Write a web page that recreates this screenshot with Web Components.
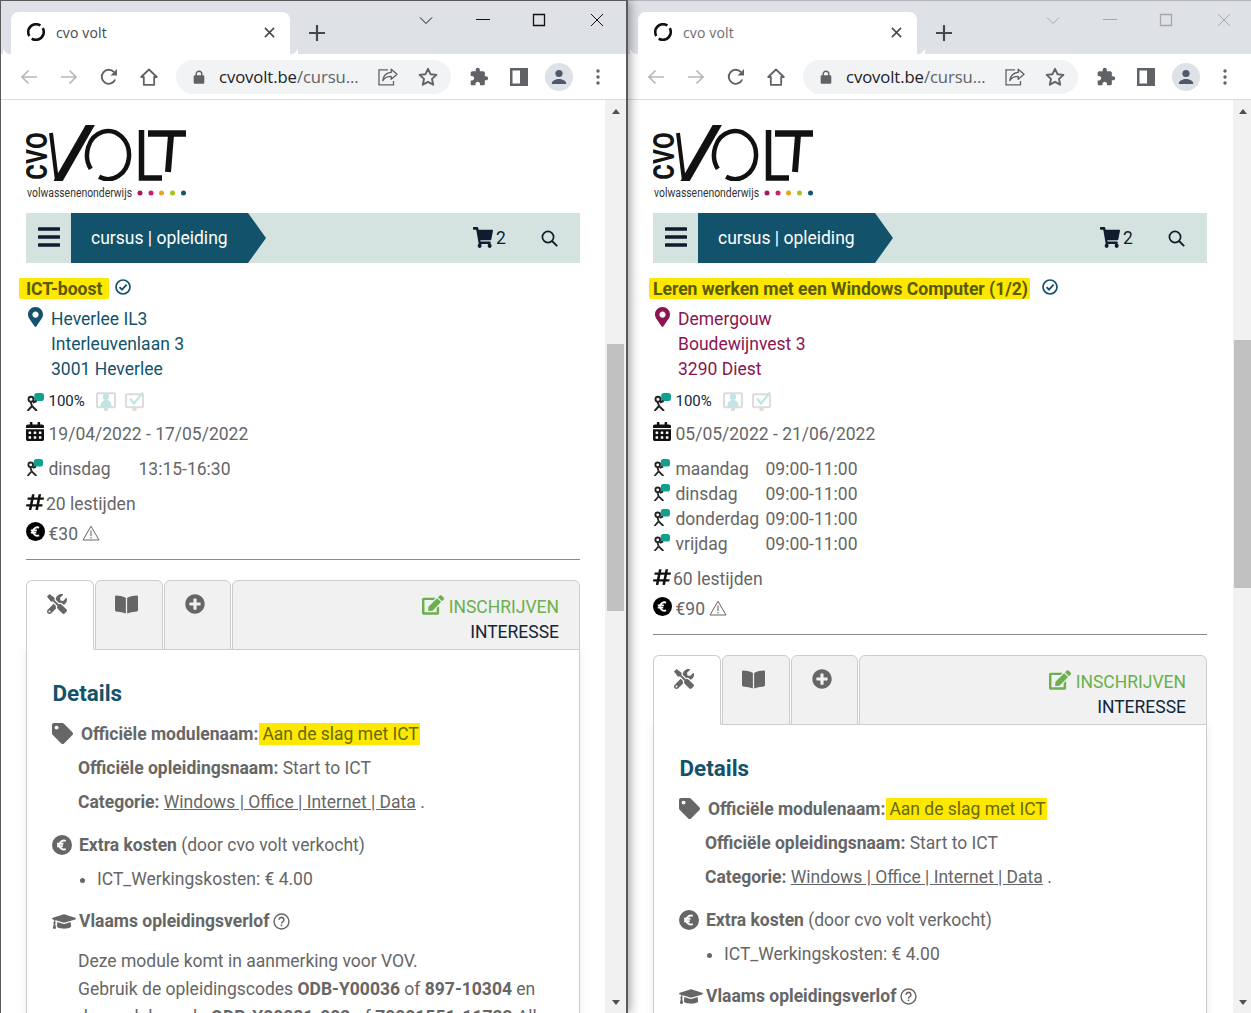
<!DOCTYPE html>
<html lang="nl"><head><meta charset="utf-8"><title>cvo volt</title>
<style>
html,body{margin:0;height:100%;overflow:hidden;background:#fff}
body{display:flex;font:17.5px/25px Roboto,"Liberation Sans",sans-serif;color:#666}
b{font-weight:700}
a{color:inherit;text-decoration:underline}
</style></head><body>

<browser-window sb="21" thumb-top="230" thumb-h="267">
  <window-chrome title="cvo volt"></window-chrome>
  <site-header></site-header>
  <course-title pl="7" pr="7" gap="6">ICT-boost</course-title>
  <course-address>Heverlee IL3<br>Interleuvenlaan 3<br>3001 Heverlee</course-address>
  <info-row style="margin-top:8px;padding-top:0;font-size:15px;color:#12263a"><presence-icons></presence-icons></info-row>
  <info-row style="margin-top:7px"><ui-icon slot="icon" name="calendar" w="18" h="19" stretch style="color:#111;margin:-7px 4.5px 0 0"></ui-icon>19/04/2022 - 17/05/2022</info-row>
  <day-row style="margin-top:10px" day="dinsdag" time="13:15-16:30" col="90"></day-row>
  <info-row style="margin-top:10px"><ui-icon slot="icon" name="hash" w="18" h="18" stretch style="color:#111;margin:-5px 2px 0 0"></ui-icon>20 lestijden</info-row>
  <price-row style="margin-top:5px">€30</price-row>
  <page-rule></page-rule>
  <tabs-panel>
    <detail-section></detail-section>
    <p style="margin:14px 0 0;line-height:28px;padding-left:25px;white-space:nowrap">Deze module komt in aanmerking voor VOV.<br>Gebruik de opleidingscodes <b>ODB-Y00036</b> of <b>897-10304</b> en<br><span style="word-spacing:2px">de module code</span> <b>ODB-Y00081-002</b> of <b>70001551-11723</b> All</p>
  </tabs-panel>
</browser-window>

<browser-window inactive sb="18" thumb-top="226" thumb-h="248">
  <window-chrome title="cvo volt" inactive></window-chrome>
  <site-header></site-header>
  <course-title pl="4" pr="2" gap="12">Leren werken met een Windows Computer (1/2)</course-title>
  <course-address style="color:#8a1550" pin="#8a1550">Demergouw<br>Boudewijnvest 3<br>3290 Diest</course-address>
  <info-row style="margin-top:8px;padding-top:0;font-size:15px;color:#12263a"><presence-icons></presence-icons></info-row>
  <info-row style="margin-top:7px"><ui-icon slot="icon" name="calendar" w="18" h="19" stretch style="color:#111;margin:-7px 4.5px 0 0"></ui-icon>05/05/2022 - 21/06/2022</info-row>
  <day-row style="margin-top:10px" day="maandag" time="09:00-11:00" col="90"></day-row>
  <day-row day="dinsdag" time="09:00-11:00" col="90"></day-row>
  <day-row day="donderdag" time="09:00-11:00" col="90"></day-row>
  <day-row day="vrijdag" time="09:00-11:00" col="90"></day-row>
  <info-row style="margin-top:10px"><ui-icon slot="icon" name="hash" w="18" h="18" stretch style="color:#111;margin:-5px 2px 0 0"></ui-icon>60 lestijden</info-row>
  <price-row style="margin-top:5px">€90</price-row>
  <page-rule></page-rule>
  <tabs-panel>
    <detail-section></detail-section>
  </tabs-panel>
</browser-window>

<script>
const P={
cart:['0 0 576 512','M528.12 301.319l47.273-208C578.806 78.301 567.391 64 551.99 64H159.208l-9.166-44.81C147.758 8.021 137.93 0 126.529 0H24C10.745 0 0 10.745 0 24v16c0 13.255 10.745 24 24 24h69.883l70.248 343.435C147.325 417.1 136 435.222 136 456c0 30.928 25.072 56 56 56s56-25.072 56-56c0-15.674-6.447-29.835-16.824-40h209.647C430.447 426.165 424 440.326 424 456c0 30.928 25.072 56 56 56s56-25.072 56-56c0-22.172-12.888-41.332-31.579-50.405l5.517-24.276c3.413-15.018-8.002-29.319-23.403-29.319H218.117l-6.545-32h293.145c11.206 0 20.92-7.754 23.403-18.681z'],
pin:['0 0 384 512','M172.268 501.67C26.97 291.031 0 256.281 0 192 0 85.961 85.961 0 192 0s192 85.961 192 192c0 64.281-26.97 99.031-172.268 309.67-9.535 13.774-29.93 13.773-39.464 0zM192 272c44.183 0 80-35.817 80-80s-35.817-80-80-80-80 35.817-80 80 35.817 80 80 80z'],
calendar:['0 0 448 512','M0 464c0 26.5 21.5 48 48 48h352c26.5 0 48-21.5 48-48V192H0v272zm320-196c0-6.6 5.4-12 12-12h40c6.6 0 12 5.4 12 12v40c0 6.6-5.4 12-12 12h-40c-6.6 0-12-5.4-12-12v-40zm0 128c0-6.6 5.4-12 12-12h40c6.6 0 12 5.4 12 12v40c0 6.6-5.4 12-12 12h-40c-6.6 0-12-5.4-12-12v-40zM192 268c0-6.6 5.4-12 12-12h40c6.6 0 12 5.4 12 12v40c0 6.6-5.4 12-12 12h-40c-6.6 0-12-5.4-12-12v-40zm0 128c0-6.6 5.4-12 12-12h40c6.6 0 12 5.4 12 12v40c0 6.6-5.4 12-12 12h-40c-6.6 0-12-5.4-12-12v-40zM64 268c0-6.6 5.4-12 12-12h40c6.6 0 12 5.4 12 12v40c0 6.6-5.4 12-12 12H76c-6.6 0-12-5.4-12-12v-40zm0 128c0-6.6 5.4-12 12-12h40c6.6 0 12 5.4 12 12v40c0 6.6-5.4 12-12 12H76c-6.6 0-12-5.4-12-12v-40zM400 64h-48V16c0-8.8-7.2-16-16-16h-32c-8.8 0-16 7.2-16 16v48H160V16c0-8.8-7.2-16-16-16h-32c-8.8 0-16 7.2-16 16v48H48C21.5 64 0 85.5 0 112v48h448v-48c0-26.5-21.5-48-48-48z'],
hash:['0 0 448 512','M440.667 182.109l7.143-40c1.313-7.355-4.342-14.109-11.813-14.109h-74.81l14.623-81.891C377.123 38.754 371.468 32 363.997 32h-40.632a12 12 0 0 0-11.813 9.891L296.175 128H197.54l14.623-81.891C213.477 38.754 207.822 32 200.35 32h-40.632a12 12 0 0 0-11.813 9.891L132.528 128H53.432a12 12 0 0 0-11.813 9.891l-7.143 40C33.163 185.246 38.818 192 46.289 192h74.81L98.242 320H19.146a12 12 0 0 0-11.813 9.891l-7.143 40C-1.123 377.246 4.532 384 12.003 384h74.81L72.19 465.891C70.877 473.246 76.532 480 84.003 480h40.632a12 12 0 0 0 11.813-9.891L151.826 384h98.634l-14.623 81.891C234.523 473.246 240.178 480 247.65 480h40.632a12 12 0 0 0 11.813-9.891L315.472 384h79.096a12 12 0 0 0 11.813-9.891l7.143-40c1.313-7.355-4.342-14.109-11.813-14.109h-74.81l22.857-128h79.096a12 12 0 0 0 11.813-9.891zM261.889 320h-98.634l22.857-128h98.634l-22.857 128z'],
tools:['0 0 512 512','M501.1 395.7L384 278.6c-23.1-23.1-57.6-27.6-85.4-13.9L192 158.1V96L64 0 0 64l96 128h62.1l106.6 106.6c-13.6 27.8-9.2 62.3 13.9 85.4l117.1 117.1c14.6 14.6 38.2 14.6 52.7 0l52.7-52.7c14.5-14.6 14.5-38.2 0-52.7zM331.7 225c28.3 0 54.9 11 74.9 31l19.4 19.4c15.8-6.9 30.8-16.5 43.8-29.5 37.1-37.1 49.7-89.3 37.9-136.7-2.2-9-13.5-12.1-20.1-5.5l-74.4 74.4-67.9-11.3L334 98.9l74.4-74.4c6.6-6.6 3.4-17.9-5.7-20.2-47.4-11.7-99.6.9-136.6 37.9-28.5 28.5-41.9 66.1-41.2 103.6l82.1 82.1c8.1-1.9 16.5-2.9 24.7-2.9zm-103.9 82l-56.7-56.7L18.7 402.8c-25 25-25 65.5 0 90.5s65.5 25 90.5 0l123.6-123.6c-7.6-19.9-9.9-41.6-5-62.7zM64 472c-13.2 0-24-10.8-24-24 0-13.3 10.7-24 24-24s24 10.7 24 24c0 13.2-10.7 24-24 24z'],
book:['0 0 576 512','M542.22 32.05c-54.8 3.11-163.72 14.43-230.96 55.59-4.64 2.84-7.27 7.89-7.27 13.17v363.87c0 11.55 12.63 18.85 23.28 13.49 69.18-34.82 169.23-44.32 218.7-46.92 16.89-.89 30.02-14.43 30.02-30.66V62.75c.01-17.71-15.35-31.74-33.77-30.7zM264.73 87.64C197.5 46.48 88.58 35.17 33.78 32.05 15.36 31.01 0 45.04 0 62.75V400.6c0 16.24 13.13 29.78 30.02 30.66 49.49 2.6 149.59 12.11 218.77 46.95 10.62 5.35 23.21-1.94 23.21-13.46V100.63c0-5.29-2.62-10.14-7.27-12.99z'],
plus:['0 0 512 512','M256 8C119 8 8 119 8 256s111 248 248 248 248-111 248-248S393 8 256 8zm144 276c0 6.6-5.4 12-12 12h-92v92c0 6.6-5.4 12-12 12h-56c-6.6 0-12-5.4-12-12v-92h-92c-6.6 0-12-5.4-12-12v-56c0-6.6 5.4-12 12-12h92v-92c0-6.6 5.4-12 12-12h56c6.6 0 12 5.4 12 12v92h92c6.6 0 12 5.4 12 12v56z'],
edit:['0 0 576 512','M402.6 83.2l90.2 90.2c3.8 3.8 3.8 10 0 13.8L274.4 405.6l-92.8 10.3c-12.4 1.4-22.9-9.1-21.5-21.5l10.3-92.8L388.8 83.2c3.8-3.8 10-3.8 13.8 0zm162-22.9l-48.8-48.8c-15.2-15.2-39.9-15.2-55.2 0l-35.4 35.4c-3.8 3.8-3.8 10 0 13.8l90.2 90.2c3.8 3.8 10 3.8 13.8 0l35.4-35.4c15.2-15.3 15.2-40 0-55.2zM384 346.2V448H64V128h229.8c3.2 0 6.2-1.3 8.5-3.5l40-40c7.6-7.6 2.2-20.5-8.5-20.5H48C21.5 64 0 85.5 0 112v352c0 26.5 21.5 48 48 48h352c26.5 0 48-21.5 48-48V306.2c0-10.7-12.9-16-20.5-8.5l-40 40c-2.2 2.3-3.5 5.3-3.5 8.5z'],
tag:['0 0 512 512','M0 252.118V48C0 21.49 21.49 0 48 0h204.118a48 48 0 0 1 33.941 14.059l211.882 211.882c18.745 18.745 18.745 49.137 0 67.882L293.823 497.941c-18.745 18.745-49.137 18.745-67.882 0L14.059 286.059A48 48 0 0 1 0 252.118zM112 64c-26.51 0-48 21.49-48 48s21.49 48 48 48 48-21.49 48-48-21.49-48-48-48z'],
cap:['0 0 640 512','M622.34 153.2L343.4 67.5c-15.2-4.67-31.6-4.67-46.79 0L17.66 153.2c-23.54 7.23-23.54 38.36 0 45.59l48.63 14.94c-10.67 13.19-17.23 29.28-17.88 46.9C38.78 266.15 32 276.11 32 288c0 10.78 5.68 19.85 13.86 25.65L20.33 428.53C18.11 438.52 25.71 448 35.94 448h56.11c10.24 0 17.84-9.48 15.62-19.47L82.14 313.65C90.32 307.85 96 298.78 96 288c0-11.57-6.47-21.25-15.66-26.87.76-15.02 8.44-28.3 20.69-36.72L296.6 284.5c9.06 2.78 26.44 6.25 46.79 0l278.95-85.7c23.55-7.24 23.55-38.36 0-45.6zM352.79 315.09c-28.53 8.76-52.84 3.92-65.59 0l-145.02-44.55L128 384c0 35.35 85.96 64 192 64s192-28.65 192-64l-14.18-113.47-145.03 44.56z'],
ext:['0 0 24 24','M20.5 11H19V7c0-1.1-.9-2-2-2h-4V3.5C13 2.12 11.88 1 10.5 1S8 2.12 8 3.5V5H4c-1.1 0-1.99.9-1.99 2v3.8H3.5c1.49 0 2.7 1.21 2.7 2.7s-1.21 2.7-2.7 2.7H2V20c0 1.1.9 2 2 2h3.8v-1.5c0-1.49 1.21-2.7 2.7-2.7 1.49 0 2.7 1.21 2.7 2.7V22H17c1.1 0 2-.9 2-2v-4h1.5c1.38 0 2.5-1.12 2.5-2.5S21.88 11 20.5 11z']
};
const RAW={
euro:`<svg viewBox="0 0 20 20"><circle cx="10" cy="10" r="10" fill="currentColor"/><path d="M13.8 5.9A4.8 4.8 0 0 0 7.2 10a4.8 4.8 0 0 0 6.6 4.1M5 8.8h6.4M5 11.2h5.8" fill="none" stroke="#fff" stroke-width="1.9"/></svg>`,
check:`<svg viewBox="0 0 16 16"><circle cx="8" cy="8" r="7" fill="none" stroke="currentColor" stroke-width="1.7"/><path d="M4.5 8.2l2.5 2.5 4.6-5" fill="none" stroke="currentColor" stroke-width="1.8"/></svg>`,
warn:`<svg viewBox="0 0 18 16"><path d="M9 1.2L17 15H1z" fill="none" stroke="currentColor" stroke-width="1" stroke-linejoin="round"/><path d="M9 5.6v5.4M9 12v1.4" stroke="currentColor" stroke-width="1.1"/></svg>`,
help:`<svg viewBox="0 0 18 18"><circle cx="9" cy="9" r="7.9" fill="none" stroke="currentColor" stroke-width="1.5"/><path d="M6.5 7.2a2.5 2.5 0 1 1 3.6 2.2c-.8.4-1.1.9-1.1 1.7M9 12.3v1.6" fill="none" stroke="currentColor" stroke-width="1.6"/></svg>`,
person:`<svg viewBox="0 0 18 18"><path d="M11 0h4.2A2.8 2.8 0 0 1 18 2.8v2.4A2.8 2.8 0 0 1 15.2 8H11L8.2 9.2 8.6 6.5A2.8 2.8 0 0 1 8.2 5.2V2.8A2.8 2.8 0 0 1 11 0z" fill="#12a08e"/><g fill="none" stroke="#222" stroke-width="1.9"><circle cx="5" cy="6.2" r="2.5"/><path d="M7 9.5l3.6-1.5M4.6 8.8l1.4 4.2M6 13L1.6 18M6 13l5 5"/></g></svg>`,
screenP:`<svg viewBox="0 0 20 19"><path d="M2 1.2h16a1 1 0 0 1 1 1v12a1 1 0 0 1-1 1H2a1 1 0 0 1-1-1v-12a1 1 0 0 1 1-1z" fill="none" stroke="#dcdcdc" stroke-width="2"/><path d="M8 15v4h4v-4" fill="#dcdcdc"/><circle cx="10" cy="4.8" r="3.2" fill="#c3e4e4"/><path d="M4.5 15c0-5 2-7 5.5-7s5.5 2 5.5 7z" fill="#c3e4e4"/></svg>`,
screenC:`<svg viewBox="0 0 20 19"><path d="M2 2.2h15a1 1 0 0 1 1 1v11a1 1 0 0 1-1 1H2a1 1 0 0 1-1-1v-11a1 1 0 0 1 1-1z" fill="none" stroke="#dcdcdc" stroke-width="2"/><path d="M7.5 15v4h4v-4" fill="#dcdcdc"/><path d="M5 6.500l4 5 9-11" fill="none" stroke="#c3e4e4" stroke-width="2.2"/></svg>`,
search:`<svg viewBox="0 0 17 17"><circle cx="7" cy="7" r="5.6" fill="none" stroke="currentColor" stroke-width="1.7"/><path d="M11 11l5.2 5.2" stroke="currentColor" stroke-width="1.9"/></svg>`,
bars:`<svg viewBox="0 0 22 22"><path d="M1 3h20M1 11h20M1 19h20" stroke="currentColor" stroke-width="3.4" stroke-linecap="round"/></svg>`,
back:`<svg viewBox="0 0 18 16"><path d="M17 8H2M8.5 1.5L2 8l6.5 6.5" fill="none" stroke="currentColor" stroke-width="1.7"/></svg>`,
forward:`<svg viewBox="0 0 18 16"><path d="M1 8h15M9.5 1.5L16 8l-6.5 6.5" fill="none" stroke="currentColor" stroke-width="1.7"/></svg>`,
reload:`<svg viewBox="0 0 18 18"><path d="M15.2 11.5A7 7 0 1 1 14 4.2" fill="none" stroke="currentColor" stroke-width="1.9"/><path d="M17 1v6.5h-6.5z" fill="currentColor"/></svg>`,
home:`<svg viewBox="0 0 18 18"><path d="M9 1.5L1.2 9h2.6v7.8h10.4V9h2.6z" fill="none" stroke="currentColor" stroke-width="1.8" stroke-linejoin="round"/></svg>`,
lock:`<svg viewBox="0 0 12 14"><path d="M3.2 6V4a2.8 2.8 0 0 1 5.6 0v2" fill="none" stroke="currentColor" stroke-width="1.4"/><rect x=".7" y="5.2" width="10.6" height="8.5" rx="1.2" fill="currentColor"/></svg>`,
share:`<svg viewBox="0 0 20 18"><path d="M10 1.8H1v15h14.5V13" fill="none" stroke="currentColor" stroke-width="1.3"/><path d="M13.2 1.2L19 6.3l-5.8 5V8.4c-4 0-6.6 1.2-8.4 4.2.5-4.700 3.300-7.700 8.400-8.200z" fill="none" stroke="currentColor" stroke-width="1.4" stroke-linejoin="round"/></svg>`,
star:`<svg viewBox="0 0 20 19"><path d="M10 1.8l2.5 5.4 5.9.7-4.400 4 1.200 5.800-5.200-2.900-5.200 2.900 1.200-5.800-4.400-4 5.900-.7z" fill="none" stroke="currentColor" stroke-width="1.9" stroke-linejoin="round"/></svg>`,
panel:`<svg viewBox="0 0 18 18"><path d="M0 0h18v18H0zM2.500 2.500v13h7.500v-13z" fill="currentColor" fill-rule="evenodd"/></svg>`,
avatar:`<svg viewBox="0 0 28 28"><circle cx="14" cy="14" r="14" fill="#dee1e6"/><circle cx="14" cy="10.5" r="3.6" fill="#50586e"/><path d="M6.8 20.5c0-3 4.3-4.5 7.2-4.5s7.2 1.5 7.2 4.5V21H6.8z" fill="#50586e"/></svg>`,
dots:`<svg viewBox="0 0 4 16"><circle cx="2" cy="2" r="1.7" fill="currentColor"/><circle cx="2" cy="8" r="1.7" fill="currentColor"/><circle cx="2" cy="14" r="1.7" fill="currentColor"/></svg>`,
fav:`<svg viewBox="0 0 18 18"><circle cx="9" cy="9" r="7.8" fill="none" stroke="#111" stroke-width="2.6" stroke-dasharray="21 3.5" stroke-dashoffset="4.35"/></svg>`,
x:`<svg viewBox="0 0 12 12"><path d="M1 1l10 10M11 1L1 11" stroke="currentColor" stroke-width="1.7"/></svg>`,
plusThin:`<svg viewBox="0 0 16 16"><path d="M8 0v16M0 8h16" stroke="currentColor" stroke-width="2.2"/></svg>`
};

class UiIcon extends HTMLElement{connectedCallback(){
  const n=this.getAttribute('name'),w=this.getAttribute('w')||18,h=this.getAttribute('h')||w;
  const inner=RAW[n]||`<svg viewBox="${P[n][0]}" preserveAspectRatio="${this.hasAttribute('stretch')?'none':'xMidYMid meet'}"><path fill="currentColor" d="${P[n][1]}"/></svg>`;
  this.attachShadow({mode:'open'}).innerHTML=`<style>:host{display:inline-block;flex:none;width:${w}px;height:${h}px;line-height:0}svg{width:100%;height:100%;display:block}</style>${inner}`;
}}
customElements.define('ui-icon',UiIcon);

class BrowserWindow extends HTMLElement{connectedCallback(){
  const ina=this.hasAttribute('inactive'),sb=this.getAttribute('sb'),t=this.getAttribute('thumb-top'),h=this.getAttribute('thumb-h');
  this.attachShadow({mode:'open'}).innerHTML=`<style>
  :host{display:flex;flex-direction:column;box-sizing:border-box;height:1013px;background:#fff;
    ${ina?'flex:1;min-width:0;border-top:1px solid #b4b6ba':'flex:none;width:628px;border:1px solid #5a5a5a;border-width:1px 2px 0 1px;position:relative;z-index:1;box-shadow:2px 0 10px rgba(0,0,0,.38)'}}
  .body{flex:1;min-height:0;display:flex}
  .pane{flex:1;min-width:0;overflow:hidden;padding:25px 0 0 25px;box-sizing:border-box}
  .inner{width:554px}
  .sb{flex:none;width:${sb}px;background:#f1f1f1;display:flex;flex-direction:column;box-sizing:border-box;padding-left:${ina?1:2}px}
  .sb>*{width:17px}
  .up,.down{height:5px;position:relative}
  .up{margin-top:9px}.down{margin-top:auto;margin-bottom:8px}
  .up i,.down i{display:block;width:0;margin:auto;border:4.5px solid transparent}
  .up i{border-top:0;border-bottom:5px solid #505050}
  .down i{border-bottom:0;border-top:5px solid #505050}
  .thumb{margin-top:${t}px;height:${h}px;background:#c1c1c1}
  </style><slot name="chrome"></slot><div class="body"><div class="pane"><div class="inner"><slot></slot></div></div>
  <div class="sb"><div class="up"><i></i></div><div class="thumb"></div><div class="down"><i></i></div></div></div>`;
  this.querySelector('window-chrome').slot='chrome';
}}
customElements.define('browser-window',BrowserWindow);

class WindowChrome extends HTMLElement{connectedCallback(){
  const ina=this.hasAttribute('inactive'),cc=ina?'#a6a8ab':'#111';
  this.attachShadow({mode:'open'}).innerHTML=`<style>
  :host{display:block;font-family:"Open Sans","Noto Sans",sans-serif}
  .strip{height:53px;background:#dee1e6;box-sizing:border-box;padding:11px 0 0 10px;display:flex;position:relative}
  .tab{width:279px;height:42px;background:#fff;border-radius:8px 8px 0 0;box-sizing:border-box;padding:0 15px 2px 16px;display:flex;align-items:center;color:${ina?'#6a6d70':'#45484c'};font-size:14px;position:relative}
  .tab::before,.tab::after{content:"";position:absolute;bottom:0;width:8px;height:8px;background:radial-gradient(circle at 0 0,#dee1e6 8px,#fff 8.5px)}
  .tab::before{left:-8px;transform:scaleX(-1)}.tab::after{right:-8px}
  .tab span{flex:1;padding-left:11px;letter-spacing:.15px}
  .tab ui-icon[name=x]{color:#45484c}
  .plus{color:#45484c;margin:13px 0 0 19px}
  .caption{display:flex;color:${cc};height:42px;position:absolute;top:0;left:0;width:100%;pointer-events:none}
  .cap{display:flex;padding:12px 0 0 418px}
  .cap svg{display:block;fill:none;stroke:${cc};stroke-width:1}
  .tool{height:45px;background:#fff;border-bottom:1px solid #dadce0;display:flex;align-items:center;padding-left:19px;color:#5f6368}
  .omni{width:275px;height:34px;border-radius:17px;background:#f1f3f4;margin:0 0 0 18px;display:flex;align-items:center;box-sizing:border-box;padding:0 13px 0 17px;color:#5f6368}
  .url{width:145px;margin-left:14px;font-size:16.7px;white-space:nowrap;color:#5f6368;letter-spacing:-.1px}
  .url b{font-weight:400;color:#202124}
  </style>
  <div class="strip"><div class="tab"><ui-icon name="fav" w="18"></ui-icon><span>${this.getAttribute('title')}</span><ui-icon name="x" w="11"></ui-icon></div>
  <ui-icon class="plus" name="plusThin" w="16"></ui-icon>
  <div class="caption"><div class="cap">
    <svg width="14" height="14" style="margin-top:2px" viewBox="0 0 14 14"><path d="M1 2.500l6 6 6-6"/></svg>
    <svg width="14" height="14" style="margin-left:43px" viewBox="0 0 14 14"><path d="M0 6.500h14"/></svg>
    <svg width="14" height="14" style="margin-left:42px" viewBox="0 0 14 14"><path d="M1.5 1.5h11v11h-11z" stroke-width="1.3"/></svg>
    <svg width="14" height="14" style="margin-left:44px" viewBox="0 0 14 14"><path d="M1 1l12 12M13 1L1 13"/></svg>
  </div></div></div>
  <div class="tool">
    <ui-icon name="back" w="18" h="16" style="color:#b6b8bb"></ui-icon>
    <ui-icon name="forward" w="18" h="16" style="color:#b6b8bb;margin-left:22px"></ui-icon>
    <ui-icon name="reload" w="18" style="margin-left:22px"></ui-icon>
    <ui-icon name="home" w="18" style="margin-left:22px"></ui-icon>
    <div class="omni"><ui-icon name="lock" w="12" h="14"></ui-icon><div class="url"><b>cvovolt.be</b>/cursu...</div>
      <ui-icon name="share" w="20" h="18" style="margin-left:20px"></ui-icon><ui-icon name="star" w="20" h="19" style="margin-left:20px"></ui-icon></div>
    <ui-icon name="ext" w="20" style="margin-left:18px"></ui-icon>
    <ui-icon name="panel" w="18" style="margin-left:21px"></ui-icon>
    <ui-icon name="avatar" w="28" style="margin-left:17px"></ui-icon>
    <ui-icon name="dots" w="4" h="16" style="margin-left:23px"></ui-icon>
  </div>`;
}}
customElements.define('window-chrome',WindowChrome);

class SiteHeader extends HTMLElement{constructor(){super();
  this.attachShadow({mode:'open'}).innerHTML=`<style>
  :host{display:block}
  svg.logo{display:block;width:165px;height:75px}
  nav{margin-top:13px;height:50px;background:#d4e3e0;display:flex;align-items:center;color:#0f1c2e}
  .ham{width:45px;flex:none;padding:0 0 3px 12px;box-sizing:border-box;display:flex}
  .lead{width:195px;height:50px;flex:none;background:#12536b;color:#fff;clip-path:polygon(0 0,177px 0,195px 50%,177px 100%,0 100%);padding-left:20px;box-sizing:border-box;line-height:50px;font-size:17.5px}
  .cart{margin-left:207px;display:flex;align-items:center}
  .cart span{margin-left:3px}
  .cart ui-icon{margin-top:-2px}
  </style>
  <svg class="logo" viewBox="0 0 165 75" aria-label="cvo volt logo">
    <text transform="translate(21 55) rotate(-90)" font-family="Roboto,sans-serif" font-size="38" font-weight="500" fill="#141414" textLength="48" lengthAdjust="spacingAndGlyphs">cvo</text>
    <defs><clipPath id="lc"><rect x="0" y="0" width="165" height="56"/></clipPath></defs>
    <g fill="none" stroke="#111" clip-path="url(#lc)">
      <path d="M25 8L31 56" stroke-width="4"/>
      <path d="M66 -3L31 58" stroke-width="8"/>
      <path d="M64.8 43.8A21 24 0 1 1 73.1 51.8" stroke-width="4.5"/>
      <path d="M115.5 5V53H136" stroke-width="5.5"/>
      <path d="M122 8.5H160" stroke-width="6.5"/>
      <path d="M145 10L142 47" stroke-width="6"/>
    </g>
    <text x="1" y="71.5" font-family="Roboto,sans-serif" font-size="12.5" fill="#333" textLength="105" lengthAdjust="spacingAndGlyphs">volwassenenonderwijs</text>
    <circle cx="114" cy="68" r="2.5" fill="#a3195b"/><circle cx="125" cy="68" r="2.5" fill="#d01c6a"/><circle cx="135.5" cy="68" r="2.5" fill="#e8a317"/><circle cx="146.5" cy="68" r="2.5" fill="#a2c617"/><circle cx="157.5" cy="68" r="2.5" fill="#15566e"/>
  </svg>
  <nav><div class="ham"><ui-icon name="bars" w="22"></ui-icon></div><div class="lead">cursus | opleiding</div>
    <div class="cart"><ui-icon name="cart" w="20" h="21" stretch></ui-icon><span>2</span></div>
    <ui-icon name="search" w="17" style="margin-left:35px"></ui-icon></nav>`;
}}
customElements.define('site-header',SiteHeader);

class CourseTitle extends HTMLElement{connectedCallback(){
  const l=this.getAttribute('pl'),r=this.getAttribute('pr'),g=this.getAttribute('gap');
  this.attachShadow({mode:'open'}).innerHTML=`<style>
  :host{display:flex;height:25px;margin-top:13px;align-items:center;color:#12536b;white-space:nowrap}
  .m{display:block;height:21px;line-height:23px;margin-left:-${l}px;padding:0 ${r}px 0 ${l}px;background:#ffe800;color:#5a5a00;font-weight:700;font-size:17.6px;border-radius:2px 1px 3px 2px/1px 2px 2px 3px;letter-spacing:-.05px}
  ui-icon{margin:-3px 0 0 ${g}px}
  </style><span class="m"><slot></slot></span><ui-icon name="check" w="16"></ui-icon>`;
}}
customElements.define('course-title',CourseTitle);

class CourseAddress extends HTMLElement{connectedCallback(){
  const pin=this.getAttribute('pin')||'#12536b';
  this.attachShadow({mode:'open'}).innerHTML=`<style>
  :host{display:flex;margin-top:5px;color:#12536b;line-height:25px;height:75px}
  ui-icon{margin:1px 0 0 2px;color:${pin}}
  div{margin-left:8px;padding-top:1px}
  </style><ui-icon name="pin" w="15" h="20"></ui-icon><div><slot></slot></div>`;
}}
customElements.define('course-address',CourseAddress);

class InfoRow extends HTMLElement{constructor(){super();
  this.attachShadow({mode:'open'}).innerHTML=`<style>
  :host{display:flex;height:25px;box-sizing:border-box;padding-top:2px;align-items:center;white-space:nowrap}
  </style><slot name="icon"></slot><slot></slot>`;
}}
customElements.define('info-row',InfoRow);

class PresenceIcons extends HTMLElement{constructor(){super();
  this.attachShadow({mode:'open'}).innerHTML=`<style>
  :host{display:flex;align-items:center;height:25px}
  span{margin:0 11px 0 5px}
  .p{margin-right:-.5px}
  </style><ui-icon class="p" name="person" w="18"></ui-icon><span>100%</span><ui-icon name="screenP" w="20" h="19"></ui-icon><ui-icon name="screenC" w="20" h="19" style="margin-left:9px"></ui-icon>`;
}}
customElements.define('presence-icons',PresenceIcons);

class DayRow extends HTMLElement{connectedCallback(){
  this.attachShadow({mode:'open'}).innerHTML=`<style>
  :host{display:flex;height:25px;box-sizing:border-box;padding-top:2px;align-items:center;white-space:nowrap}
  ui-icon{margin:-5px 5.5px 0 0}
  .d{width:${this.getAttribute('col')}px}
  </style><ui-icon name="person" w="17"></ui-icon><span class="d">${this.getAttribute('day')}</span><span>${this.getAttribute('time')}</span>`;
}}
customElements.define('day-row',DayRow);

class PriceRow extends HTMLElement{constructor(){super();
  this.attachShadow({mode:'open'}).innerHTML=`<style>
  :host{display:flex;height:25px;box-sizing:border-box;padding-top:2px;align-items:center;white-space:nowrap}
  .e{color:#000;margin:-7px 3.5px 0 0}
  .w{color:#666;margin-left:4px;margin-top:-3px}
  </style><ui-icon class="e" name="euro" w="19"></ui-icon><slot></slot><ui-icon class="w" name="warn" w="18" h="16"></ui-icon>`;
}}
customElements.define('price-row',PriceRow);

class PageRule extends HTMLElement{constructor(){super();
  this.attachShadow({mode:'open'}).innerHTML=`<style>:host{display:block;height:1px;background:#8a8a8a;margin:13px 0 20px}</style>`;
}}
customElements.define('page-rule',PageRule);

class TabsPanel extends HTMLElement{constructor(){super();
  this.attachShadow({mode:'open'}).innerHTML=`<style>
  :host{display:block;position:relative}
  .tabs{display:flex;height:70px;gap:1px}
  .t{box-sizing:border-box;border:1px solid #ccc;border-radius:6px 6px 0 0;background:#f1f1f1;display:flex;justify-content:center;padding:13px 6px 0 0;color:#666;flex:none}
  .t.on{background:#fff;border-bottom-color:#fff;width:68px;position:relative;z-index:1}
  .t.b{width:68px}.t.c{width:67px}
  .t.act{flex:1;justify-content:flex-end;padding:14px 20px 0 0;color:#12263a;line-height:25px;text-align:right}
  .g{color:#6ab04c;display:flex;align-items:center;justify-content:flex-end}
  .g ui-icon{margin:-5px 5px 0 0}
  .card{box-sizing:border-box;margin-top:-1px;border:1px solid #ccc;border-bottom:0;background:#fff;padding:29px 26px 0;box-shadow:0 0 10px rgba(0,0,0,.08);min-height:700px}
  </style>
  <div class="tabs">
    <div class="t on"><ui-icon name="tools" w="20"></ui-icon></div>
    <div class="t b"><ui-icon name="book" w="23" h="21"></ui-icon></div>
    <div class="t c"><ui-icon name="plus" w="20"></ui-icon></div>
    <div class="t act"><div><div class="g"><ui-icon name="edit" w="22" h="20"></ui-icon>INSCHRIJVEN</div>INTERESSE</div></div>
  </div>
  <div class="card"><slot></slot></div>`;
}}
customElements.define('tabs-panel',TabsPanel);

class DetailSection extends HTMLElement{constructor(){super();
  this.attachShadow({mode:'open'}).innerHTML=`<style>
  :host{display:block;white-space:nowrap}
  h2{margin:0 0 0 -.5px;font-size:22.4px;line-height:28px;font-weight:700;color:#12536b}
  .r{display:flex;align-items:center;height:25px;box-sizing:border-box;padding-top:2px}
  .y{background:#ffe800;color:#666a00;padding:0 1px 0 3px;margin:-2px 0 0 1px;line-height:22px}
  b{font-weight:700}
  a{color:inherit;text-decoration:underline}
  .ind{padding-left:25px}
  ul{margin:0;padding:0 0 0 44px}
  </style>
  <h2>Details</h2>
  <div class="r" style="margin-top:14px"><ui-icon name="tag" w="21" style="margin:-2px 8px 0 -1px"></ui-icon><b>Officiële modulenaam:</b><span class="y">Aan de slag met ICT</span></div>
  <div class="r ind" style="margin-top:9px"><span><b>Officiële opleidingsnaam:</b> Start to ICT</span></div>
  <div class="r ind" style="margin-top:9px"><span><b>Categorie:</b> <a>Windows | Office | Internet | Data</a> .</span></div>
  <div class="r" style="margin-top:18px"><ui-icon name="euro" w="20" style="margin:-1px 7px 0 -1px"></ui-icon><span><b>Extra kosten</b> (door cvo volt verkocht)</span></div>
  <ul style="margin-top:10px"><li>ICT_Werkingskosten: € 4.00</li></ul>
  <div class="r" style="margin-top:16px"><ui-icon name="cap" w="24" h="19" style="margin:0 3px 0 -1px"></ui-icon><b>Vlaams opleidingsverlof</b><ui-icon name="help" w="17" style="margin:0 0 0 4px"></ui-icon></div>`;
}}
customElements.define('detail-section',DetailSection);
</script>
</body></html>
